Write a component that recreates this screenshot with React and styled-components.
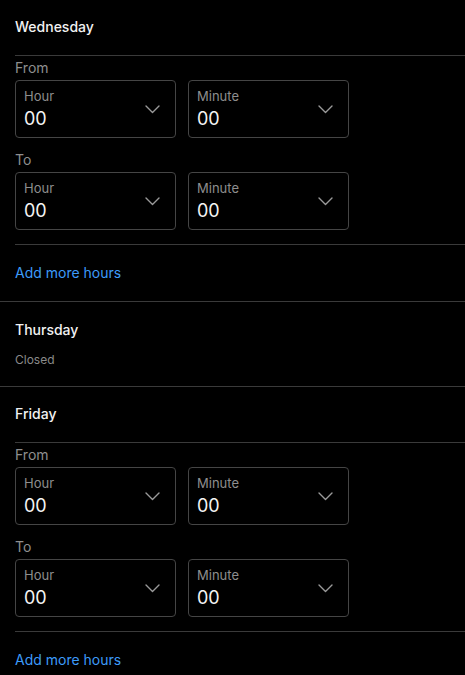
import React from "react";
import styled, { createGlobalStyle } from "styled-components";

const GlobalStyle = createGlobalStyle`
  html, body {
    margin: 0;
    padding: 0;
    background: #000;
  }
  body {
    font-family: Inter, "Noto Sans", sans-serif;
    -webkit-font-smoothing: antialiased;
  }
`;

const Page = styled.div`
  background: #000;
  color: #fff;
  width: 465px;
  min-height: 675px;
`;

const Day = styled.section`
  border-bottom: 1px solid #3a3a3a;
`;

const DayTitle = styled.h3`
  margin: 0;
  padding: ${(p) => (p.$closed ? "19px 15px 0" : "18px 15px 19px")};
  font-size: 14px;
  line-height: 18px;
  font-weight: 500;
  color: #f2f2f2;
`;

const ClosedText = styled.div`
  padding: 13px 15px 18px;
  font-size: 12px;
  line-height: 16px;
  color: #8a8a8a;
`;

const Body = styled.div`
  margin-left: 15px;
  border-top: 1px solid #3a3a3a;
  padding-top: 2px;
`;

const RangeLabel = styled.div`
  font-size: 14px;
  line-height: 20px;
  color: #8e8e8e;
  margin-top: ${(p) => (p.$first ? "0" : "12px")};
`;

const Row = styled.div`
  display: flex;
  gap: 12px;
  margin-top: 2px;
`;

const Select = styled.div`
  box-sizing: border-box;
  width: 161px;
  height: 58px;
  border: 1px solid #454545;
  border-radius: 4px;
  padding: 7px 15px 7px 8px;
  display: flex;
  align-items: center;
  justify-content: space-between;
`;

const SelectText = styled.div`
  display: flex;
  flex-direction: column;
  gap: 4px;
`;

const SelectLabel = styled.span`
  font-size: 13px;
  line-height: 16px;
  color: #8e8e8e;
`;

const SelectValue = styled.span`
  font-size: 18px;
  line-height: 22px;
  color: #f4f4f4;
`;

const Footer = styled.div`
  margin-top: 14px;
  margin-left: 15px;
  border-top: 1px solid #3a3a3a;
  padding: 18px 0 18px;
`;

const AddLink = styled.a`
  font-size: 14px;
  line-height: 20px;
  color: #3d9bf9;
  text-decoration: none;
  display: block;
`;

const Chevron = () => (
  <svg width="15" height="9" viewBox="0 0 15 9" fill="none">
    <path d="M1 1l6.5 6.5L14 1" stroke="#9a9a9a" strokeWidth="1.4" strokeLinecap="round" strokeLinejoin="round" />
  </svg>
);

const TimeSelect = ({ label, value }) => (
  <Select>
    <SelectText>
      <SelectLabel>{label}</SelectLabel>
      <SelectValue>{value}</SelectValue>
    </SelectText>
    <Chevron />
  </Select>
);

const TimeRow = () => (
  <Row>
    <TimeSelect label="Hour" value="00" />
    <TimeSelect label="Minute" value="00" />
  </Row>
);

const OpenDay = ({ name }) => (
  <Day>
    <DayTitle>{name}</DayTitle>
    <Body>
      <RangeLabel $first>From</RangeLabel>
      <TimeRow />
      <RangeLabel>To</RangeLabel>
      <TimeRow />
    </Body>
    <Footer>
      <AddLink href="#">Add more hours</AddLink>
    </Footer>
  </Day>
);

const ClosedDay = ({ name }) => (
  <Day>
    <DayTitle $closed>{name}</DayTitle>
    <ClosedText>Closed</ClosedText>
  </Day>
);

export default function App() {
  return (
    <>
      <GlobalStyle />
      <Page>
        <OpenDay name="Wednesday" />
        <ClosedDay name="Thursday" />
        <OpenDay name="Friday" />
      </Page>
    </>
  );
}
